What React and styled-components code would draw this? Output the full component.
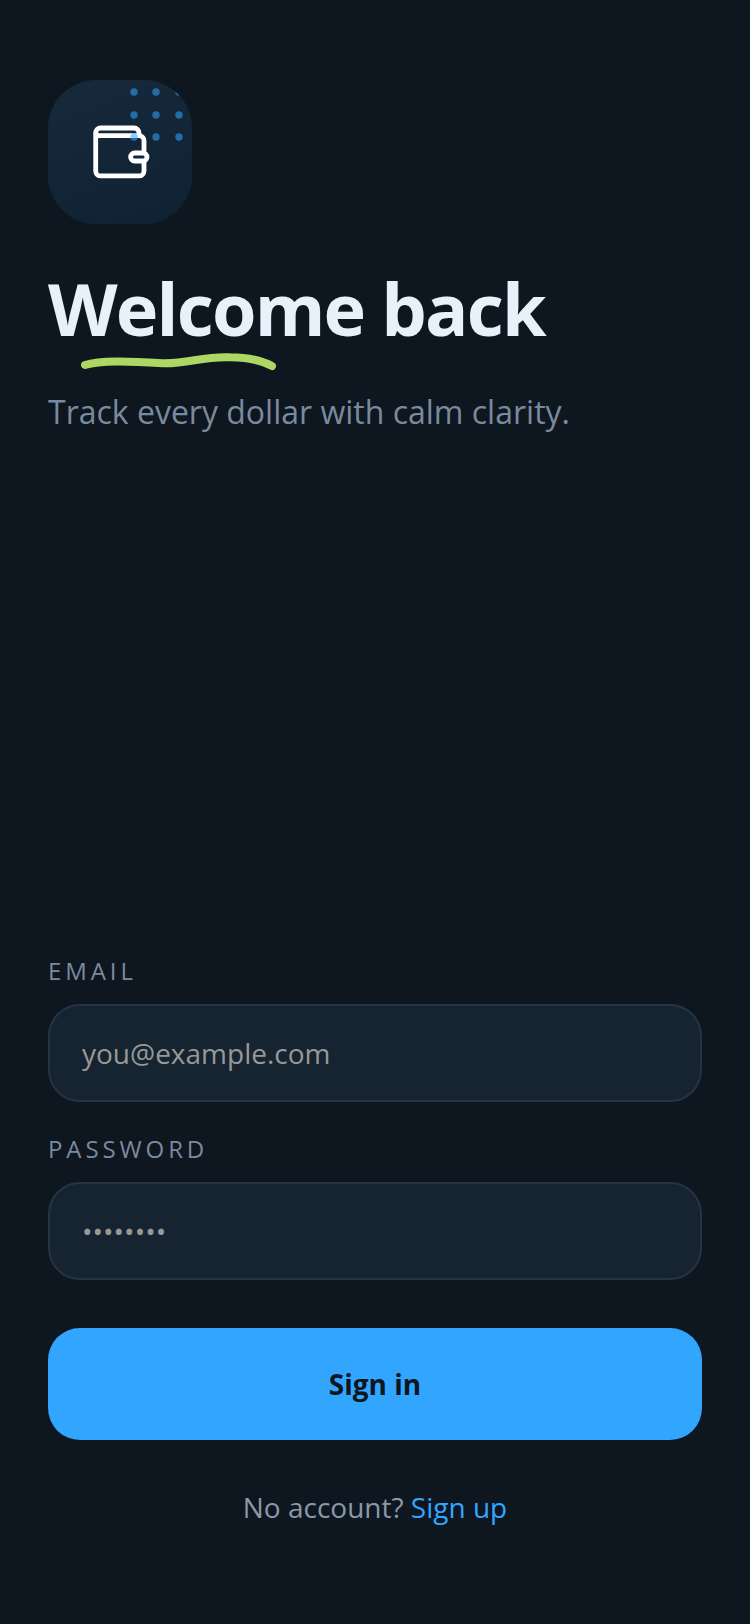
import styled, { createGlobalStyle } from "styled-components";

const GlobalStyle = createGlobalStyle`
    html, body {
        margin: 0;
        padding: 0;
        background: #0e1620;
    }
    * {
        box-sizing: border-box;
    }
`;

const Page = styled.div`
    display: flex;
    flex-direction: column;
    justify-content: space-between;
    width: 750px;
    height: 1624px;
    padding: 80px 48px 0;
    background: #0e1620;
    font-family: "Open Sans", "Liberation Sans", sans-serif;
`;

const Hero = styled.header`
    display: flex;
    flex-direction: column;
    align-items: flex-start;
`;

const Logo = styled.div`
    position: relative;
    display: flex;
    align-items: center;
    justify-content: center;
    width: 144px;
    height: 144px;
    border-radius: 48px;
    overflow: hidden;
    background: linear-gradient(160deg, #172a3c 0%, #0f2233 100%);
`;

const Dots = styled.svg`
    position: absolute;
    top: 0;
    left: 0;
`;

const TitleWrap = styled.div`
    position: relative;
    margin-top: 40px;
`;

const Title = styled.h1`
    margin: 0;
    font-size: 72px;
    line-height: 88px;
    font-weight: 700;
    letter-spacing: -1.8px;
    color: #e8f0fa;
`;

const Underline = styled.svg`
    position: absolute;
    top: 0;
    left: 0;
    overflow: visible;
`;

const Subtitle = styled.p`
    margin: 38px 0 0;
    font-size: 32px;
    line-height: 44px;
    color: #7a8a9e;
`;

const Form = styled.form`
    display: flex;
    flex-direction: column;
    padding-bottom: 97px;
`;

const Field = styled.label`
    display: flex;
    flex-direction: column;
    gap: 17px;
    margin-bottom: 31px;
`;

const FieldLabel = styled.span`
    font-size: 24px;
    line-height: 32px;
    letter-spacing: 3.9px;
    color: #7a8a9e;
`;

const Input = styled.input`
    width: 100%;
    height: 98px;
    padding: 0 32px;
    border: 2px solid #253445;
    border-radius: 32px;
    background: #162331;
    outline: none;
    font-family: inherit;
    font-size: 28px;
    color: #e8f0fa;

    &::placeholder {
        color: #989898;
        opacity: 1;
    }
`;

const SubmitButton = styled.button`
    height: 112px;
    margin-top: 17px;
    border: none;
    border-radius: 32px;
    background: #32a5ff;
    font-family: inherit;
    font-size: 28px;
    font-weight: 700;
    color: #0e1620;
`;

const Footer = styled.p`
    margin: 47px 0 0;
    text-align: center;
    font-size: 28px;
    line-height: 40px;
    color: #8a98a9;
`;

const FooterLink = styled.a`
    color: #32a5ff;
    text-decoration: none;
`;

const dotColumns = [86, 108, 131];
const dotRows = [12, 35, 57];

function WalletIcon() {
    return (
        <svg width="64" height="64" viewBox="0 0 64 64" fill="none" stroke="#fff" strokeWidth="4.8" strokeLinejoin="round" strokeLinecap="round">
            <path d="M51 15.7V13a5 5 0 0 0-5-5H13a5 5 0 0 0-5.3 5v37.9a5 5 0 0 0 5 5H51a5 5 0 0 0 5-5V20.7a5 5 0 0 0-5-5H12a4 4 0 0 1-4.3-3" />
            <rect x="42.6" y="33" width="16.4" height="8" rx="4" fill="#12273a" />
        </svg>
    );
}

export default function App() {
    return (
        <Page>
            <GlobalStyle />
            <Hero>
                <Logo>
                    <WalletIcon />
                    <Dots width="144" height="144" viewBox="0 0 144 144">
                        {dotRows.map((y) =>
                            dotColumns.map((x) => <circle key={`${x}-${y}`} cx={x} cy={y} r="3.7" fill="#32a5ff" fillOpacity="0.55" />)
                        )}
                    </Dots>
                </Logo>
                <TitleWrap>
                    <Title>Welcome back</Title>
                    <Underline width="300" height="30" viewBox="0 0 300 30">
                        <path
                            d="M37 101C52 96 80 97 115 99.3C140 100 155 92 182 93.3C200 93.5 215 97 224 102"
                            fill="none"
                            stroke="#aed662"
                            strokeWidth="8"
                            strokeLinecap="round"
                        />
                    </Underline>
                </TitleWrap>
                <Subtitle>Track every dollar with calm clarity.</Subtitle>
            </Hero>
            <Form>
                <Field>
                    <FieldLabel>EMAIL</FieldLabel>
                    <Input type="email" placeholder="you@example.com" />
                </Field>
                <Field>
                    <FieldLabel>PASSWORD</FieldLabel>
                    <Input type="password" placeholder="••••••••" />
                </Field>
                <SubmitButton type="button">Sign in</SubmitButton>
                <Footer>
                    No account? <FooterLink href="#">Sign up</FooterLink>
                </Footer>
            </Form>
        </Page>
    );
}
